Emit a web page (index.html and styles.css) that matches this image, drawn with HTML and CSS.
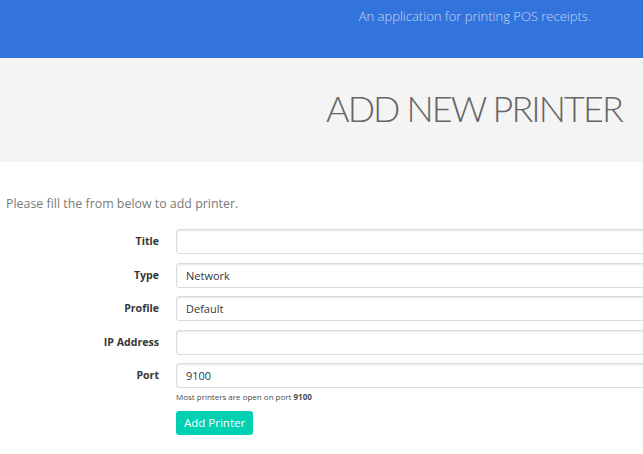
FILE: index.html
```html
<!DOCTYPE html>
<html>
<head>
<meta charset="utf-8">
<link rel="stylesheet" href="styles.css">
</head>
<body>
<header class="topbar">
  <p class="tagline">An application for printing POS receipts.</p>
</header>
<section class="hero">
  <h1 class="title">ADD NEW PRINTER</h1>
</section>
<main class="content">
  <p class="intro">Please fill the from below to add printer.</p>
  <form class="form">
    <div class="row">
      <label class="label">Title</label>
      <div class="control"><input class="input" type="text"></div>
    </div>
    <div class="row">
      <label class="label">Type</label>
      <div class="control"><div class="input">Network</div></div>
    </div>
    <div class="row">
      <label class="label">Profile</label>
      <div class="control"><div class="input">Default</div></div>
    </div>
    <div class="row">
      <label class="label">IP Address</label>
      <div class="control"><input class="input" type="text"></div>
    </div>
    <div class="row">
      <label class="label">Port</label>
      <div class="control">
        <input class="input" type="text" value="9100">
        <p class="help">Most printers are open on port <b>9100</b></p>
      </div>
    </div>
    <div class="row row-submit">
      <span class="label"></span>
      <div class="control"><button class="button" type="button">Add Printer</button></div>
    </div>
  </form>
</main>
</body>
</html>
```
FILE: styles.css
```css
html, body {
  margin: 0;
  padding: 0;
  overflow: hidden;
  background: #fff;
  font-family: "Open Sans", "Noto Sans", sans-serif;
}
.topbar {
  background: #3273dc;
  height: 58px;
  display: flex;
  justify-content: flex-end;
  padding-right: 52px;
}
.tagline {
  margin: 7px 0 0;
  font-size: 13px;
  font-weight: 300;
  color: rgba(255,255,255,0.72);
}
.hero {
  background: #f4f4f4;
  height: 104px;
  display: flex;
  align-items: center;
  justify-content: flex-end;
  padding-right: 21px;
}
.title {
  margin: 0 0 4px;
  font-family: "Lato", sans-serif;
  font-weight: 300;
  font-size: 36px;
  letter-spacing: -1.9px;
  color: #666;
}
.content {
  padding: 33px 0 0 6px;
}
.intro {
  margin: 0 0 17px;
  font-size: 12.4px;
  color: #7a7a7a;
}
.form {
  display: flex;
  flex-direction: column;
  gap: 8.5px;
}
.row {
  display: flex;
  align-items: flex-start;
  gap: 17px;
}
.row-submit {
  margin-top: -8.5px;
}
.label {
  width: 153px;
  flex: none;
  text-align: right;
  font-size: 10.6px;
  font-weight: 700;
  color: #363636;
  line-height: 25px;
}
.control {
  width: 520px;
  flex: none;
}
.input {
  box-sizing: border-box;
  display: block;
  width: 100%;
  height: 25px;
  border: 1px solid #dbdbdb;
  border-radius: 3px;
  box-shadow: inset 0 1px 2px rgba(10,10,10,0.1);
  padding: 0 9px;
  font-family: inherit;
  font-size: 11px;
  line-height: 23px;
  color: #363636;
  background: #fff;
  outline: none;
}
.help {
  margin: 4px 0 8px;
  font-size: 8px;
  line-height: 10px;
  color: #4a4a4a;
}
.button {
  height: 24px;
  padding: 0 8px;
  border: none;
  border-radius: 3px;
  background: #00d1b2;
  color: #fff;
  font-family: inherit;
  font-size: 11.5px;
}
```
